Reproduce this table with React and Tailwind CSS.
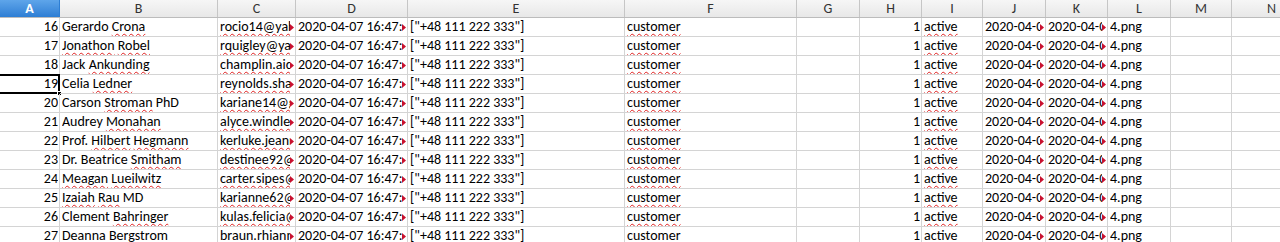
import React from 'react';

const cols = [
  { key: 'A', w: 'w-[60px]' },
  { key: 'B', w: 'w-[158px]' },
  { key: 'C', w: 'w-[78px]' },
  { key: 'D', w: 'w-[112px]' },
  { key: 'E', w: 'w-[217px]' },
  { key: 'F', w: 'w-[172px]' },
  { key: 'G', w: 'w-[63px]' },
  { key: 'H', w: 'w-[62px]' },
  { key: 'I', w: 'w-[61px]' },
  { key: 'J', w: 'w-[63px]' },
  { key: 'K', w: 'w-[62px]' },
  { key: 'L', w: 'w-[63px]' },
  { key: 'M', w: 'w-[61px]' },
  { key: 'N', w: 'w-[80px]' },
];

// words that get the spell-check squiggle are wrapped in [ ]
const rows = [
  [16, 'Gerardo [Crona]', 'rocio14@yahoo.com'],
  [17, '[Jonathon] [Robel]', 'rquigley@yahoo.com'],
  [18, 'Jack [Ankunding]', 'champlin.aidan@gmail.com'],
  [19, 'Celia [Ledner]', 'reynolds.shanna@hotmail.com'],
  [20, 'Carson [Stroman] PhD', 'kariane14@gmail.com'],
  [21, 'Audrey [Monahan]', 'alyce.windler@yahoo.com'],
  [22, 'Prof. [Hilbert] [Hegmann]', 'kerluke.jeanne@gmail.com'],
  [23, 'Dr. Beatrice [Smitham]', 'destinee92@hotmail.com'],
  [24, '[Meagan] [Lueilwitz]', 'carter.sipes@yahoo.com'],
  [25, '[Izaiah] [Rau] MD', 'karianne62@gmail.com'],
  [26, 'Clement [Bahringer]', 'kulas.felicia@yahoo.com'],
  [27, 'Deanna [Bergstrom]', 'braun.rhianna@gmail.com'],
];

const squiggle = 'underline decoration-wavy decoration-[#e02020] decoration-[1px] underline-offset-[2px]';

const Spelled = ({ text }) =>
  text.split(/(\[[^\]]+\])/).map((part, i) =>
    part.startsWith('[') ? (
      <span key={i} className={squiggle}>{part.slice(1, -1)}</span>
    ) : (
      <span key={i}>{part}</span>
    )
  );

const Arrow = () => (
  <svg className="absolute right-[1px] top-[6px]" width="4" height="7" viewBox="0 0 4 7">
    <path d="M0 0 L4 3.5 L0 7 Z" fill="#c8102e" />
  </svg>
);

const Cell = ({ w, children, right, clip, active }) => (
  <div
    className={`${w} relative shrink-0 h-[19px] border-r border-b border-[#d4d4d4] whitespace-nowrap leading-[18px] ${right ? 'text-right pr-[1px]' : 'pl-[2px]'}`}
  >
    <div className={clip ? 'overflow-hidden mr-[5px]' : 'overflow-hidden'}>{children}</div>
    {clip && <Arrow />}
    {active && (
      <>
        <div className="absolute -left-[2px] -top-[1px] -right-[1px] -bottom-[1px] border-2 border-black pointer-events-none" />
        <div className="absolute -right-[3px] -bottom-[3px] w-[5px] h-[5px] bg-black border border-white" />
      </>
    )}
  </div>
);

export default function App() {
  return (
    <div
      className="w-[1280px] h-[242px] overflow-hidden bg-white text-[14px] text-black"
      style={{ fontFamily: 'Carlito, Lato, "Liberation Sans", sans-serif' }}
    >
      <div className="flex h-[18px] bg-gradient-to-b from-[#f6f6f6] to-[#e8e8e8] border-b border-[#bcbcbc] text-[#333]">
        {cols.map((c) => (
          <div
            key={c.key}
            className={`${c.w} shrink-0 text-center leading-[18px] border-r ${
              c.key === 'A'
                ? 'bg-gradient-to-b from-[#5ea5ea] to-[#2d7ed4] text-white font-bold border-[#2d7ed4]'
                : 'border-[#c6c6c6]'
            }`}
          >
            {c.key}
          </div>
        ))}
      </div>
      {rows.map(([n, name, email]) => (
        <div key={n} className="flex">
          <Cell w="w-[60px]" right active={n === 19}>{n}</Cell>
          <Cell w="w-[158px]"><Spelled text={name} /></Cell>
          <Cell w="w-[78px]" clip><span className={squiggle}>{email}</span></Cell>
          <Cell w="w-[112px]" clip>2020-04-07 16:47:52</Cell>
          <Cell w="w-[217px]">["+48 111 222 333"]</Cell>
          <Cell w="w-[172px]"><span className={squiggle}>customer</span></Cell>
          <Cell w="w-[63px]" />
          <Cell w="w-[62px]" right>1</Cell>
          <Cell w="w-[61px]"><span className={squiggle}>active</span></Cell>
          <Cell w="w-[63px]" clip>2020-04-07</Cell>
          <Cell w="w-[62px]" clip>2020-04-07</Cell>
          <Cell w="w-[63px]">4.png</Cell>
          <Cell w="w-[61px]" />
          <Cell w="w-[80px]" />
        </div>
      ))}
    </div>
  );
}
